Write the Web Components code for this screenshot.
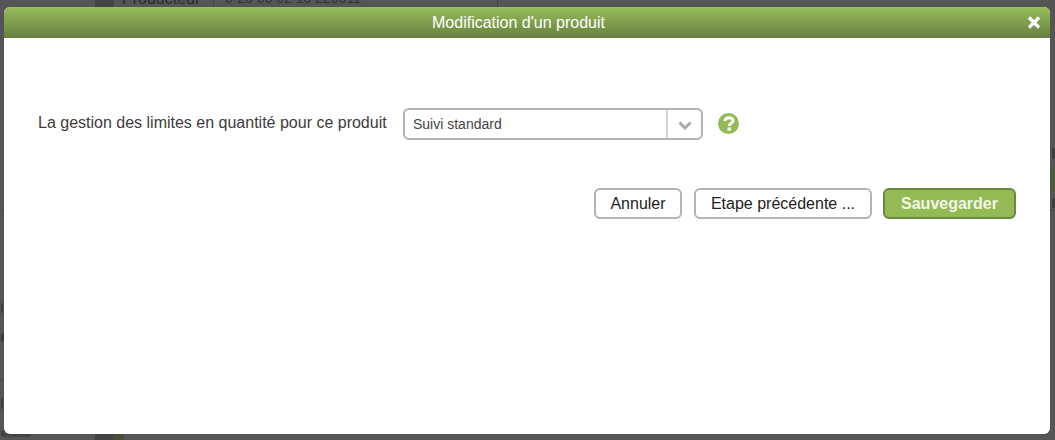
<!DOCTYPE html>
<html lang="fr">
<head>
<meta charset="utf-8">
<title>Modification d'un produit</title>
<style>
  html, body { margin: 0; height: 100%; background: #555; overflow: hidden; }
  body { font-family: "Liberation Sans", Arial, sans-serif; }
</style>
</head>
<body>
<page-behind></page-behind>
<product-dialog heading="Modification d'un produit">
  <form-row label="La gestion des limites en quantité pour ce produit">
    <drop-select value="Suivi standard"></drop-select>
    <help-icon></help-icon>
  </form-row>
  <dialog-actions>
    <action-button style="--w: 88px">Annuler</action-button>
    <action-button style="--w: 178px">Etape précédente ...</action-button>
    <action-button primary style="--w: 133px; margin-left: -1px">Sauvegarder</action-button>
  </dialog-actions>
</product-dialog>

<script>
  // the dimmed page behind the modal
  class PageBehind extends HTMLElement {
    constructor() {
      super();
      this.attachShadow({ mode: 'open' });
      this.shadowRoot.innerHTML = `
      <style>
        :host { position: absolute; inset: 0; display: block; overflow: hidden; color: #2a2a2a; font-size: 16px; }
        div { position: absolute; }
        .txt { white-space: nowrap; filter: blur(.6px); }
        .line { background: #494949; height: 1px; }
        .mark { border-radius: 2px; background: #3d3d3d; filter: blur(.7px); }
      </style>
      <div style="left:95px;top:0;width:18px;height:7px;background:#444"></div>
      <div style="left:113px;top:0;width:1px;height:7px;background:#444"></div>
      <div style="left:213px;top:0;width:1px;height:7px;background:#444"></div>
      <div style="left:497px;top:0;width:1px;height:7px;background:#444"></div>
      <div class="txt" style="left:122px;top:-10px">Producteur</div>
      <div class="txt" style="left:225px;top:-10px;font-size:14px;color:#333">0-20 00 02 10 220011</div>
      <div class="line" style="left:0;top:210px;width:5px"></div>
      <div class="line" style="left:0;top:380px;width:5px"></div>
      <div class="mark" style="left:1px;top:303px;width:2px;height:10px"></div>
      <div class="mark" style="left:1px;top:333px;width:3px;height:8px"></div>
      <div class="mark" style="left:1px;top:398px;width:2px;height:11px"></div>
      <div class="mark" style="left:1px;top:430px;width:30px;height:7px;background:#444"></div>
      <div style="left:95px;top:434px;width:18px;height:6px;background:#444"></div>
      <div style="left:113px;top:434px;width:11px;height:6px;background:#474f3a"></div>
      <div style="left:1050px;top:167px;width:5px;height:24px;background:#4f5a3c"></div>
      <div class="line" style="left:1050px;top:210px;width:5px"></div>
      <div class="mark" style="left:1052px;top:148px;width:3px;height:11px"></div>
      <div class="mark" style="left:1052px;top:198px;width:3px;height:10px"></div>
      `;
    }
  }
  customElements.define('page-behind', PageBehind);

  class ProductDialog extends HTMLElement {
    constructor() {
      super();
      this.attachShadow({ mode: 'open' });
      this.shadowRoot.innerHTML = `
      <style>
        :host {
          position: absolute;
          left: 4px; top: 7px;
          width: 1046px; height: 427px;
          display: flex;
          flex-direction: column;
          background: #fff;
          border-radius: 6px;
          overflow: hidden;
        }
        header {
          height: 31px;
          display: flex;
          align-items: center;
          justify-content: center;
          position: relative;
          background: linear-gradient(#98bd5c, #678040);
          color: #fff;
          font-size: 16px;
          padding-right: 17px;
        }
        header svg { position: absolute; right: 9px; top: 9px; }
        main { flex: 1; padding: 70px 34px 0; }
      </style>
      <header>
        <span id="title"></span>
        <svg width="14" height="13" viewBox="0 0 14 13"><path d="M2 1.5 12 11.5M12 1.5 2 11.5" stroke="#fff" stroke-width="3.2" fill="none"/></svg>
      </header>
      <main><slot></slot></main>
      `;
      this.shadowRoot.getElementById('title').textContent = this.getAttribute('heading');
    }
  }
  customElements.define('product-dialog', ProductDialog);

  class FormRow extends HTMLElement {
    constructor() {
      super();
      this.attachShadow({ mode: 'open' });
      this.shadowRoot.innerHTML = `
      <style>
        :host { display: flex; align-items: center; height: 32px; color: #3c3c3c; font-size: 16px; }
        label { width: 365px; flex: none; position: relative; top: -1px; }
      </style>
      <label></label><slot></slot>
      `;
      this.shadowRoot.querySelector('label').textContent = this.getAttribute('label');
    }
  }
  customElements.define('form-row', FormRow);

  class DropSelect extends HTMLElement {
    constructor() {
      super();
      this.attachShadow({ mode: 'open' });
      this.shadowRoot.innerHTML = `
      <style>
        :host {
          box-sizing: border-box;
          width: 300px; height: 32px;
          display: flex;
          align-items: center;
          border: 2px solid #b3b3b3;
          border-radius: 6px;
          font-size: 14px;
          color: #444;
          background: #fff;
        }
        span { flex: 1; padding-left: 8px; }
        div {
          width: 33px; height: 100%;
          flex: none;
          display: flex;
          align-items: center;
          justify-content: center;
          border-left: 2px solid #d4d4d4;
        }
        svg { margin-top: 2px; }
      </style>
      <span></span>
      <div><svg width="14" height="9" viewBox="0 0 14 9"><path d="M1.5 1.5 7 7l5.500-5.500" stroke="#aaa" stroke-width="3" fill="none"/></svg></div>
      `;
      this.shadowRoot.querySelector('span').textContent = this.getAttribute('value');
    }
  }
  customElements.define('drop-select', DropSelect);

  class HelpIcon extends HTMLElement {
    constructor() {
      super();
      this.attachShadow({ mode: 'open' });
      this.shadowRoot.innerHTML = `
      <style>
        :host {
          box-sizing: border-box;
          width: 21px; height: 21px;
          margin-left: 15px;
          margin-bottom: 2px;
          display: flex;
          align-items: center;
          justify-content: center;
          border-radius: 50%;
          background: #93ba55;
        }
        svg { display: block; }
      </style>
      <svg width="12" height="15" viewBox="0 0 12 15">
        <path d="M2 5C2 2.800 3.800 1.700 6 1.700 8.200 1.700 10 2.900 10 4.700 10 7.300 6.200 7.200 6.200 10" stroke="#fff" stroke-width="3" fill="none"/>
        <rect x="4.500" y="11.500" width="3.400" height="3.200" fill="#fff"/>
      </svg>
      `;
    }
  }
  customElements.define('help-icon', HelpIcon);

  class DialogActions extends HTMLElement {
    constructor() {
      super();
      this.attachShadow({ mode: 'open' });
      this.shadowRoot.innerHTML = `
      <style>
        :host { display: flex; justify-content: flex-end; gap: 12px; margin-top: 48px; }
      </style>
      <slot></slot>
      `;
    }
  }
  customElements.define('dialog-actions', DialogActions);

  class ActionButton extends HTMLElement {
    constructor() {
      super();
      this.attachShadow({ mode: 'open' });
      this.shadowRoot.innerHTML = `
      <style>
        :host {
          box-sizing: border-box;
          width: var(--w);
          height: 31px;
          display: flex;
          align-items: center;
          justify-content: center;
          border: 2px solid #b3b3b3;
          border-radius: 6px;
          background: #fff;
          color: #222;
          font-size: 16px;
        }
        :host([primary]) {
          background: #93ba55;
          border-color: #6b8840;
          color: #f2f6e8;
          font-weight: bold;
        }
      </style>
      <slot></slot>
      `;
    }
  }
  customElements.define('action-button', ActionButton);
</script>
</body>
</html>
